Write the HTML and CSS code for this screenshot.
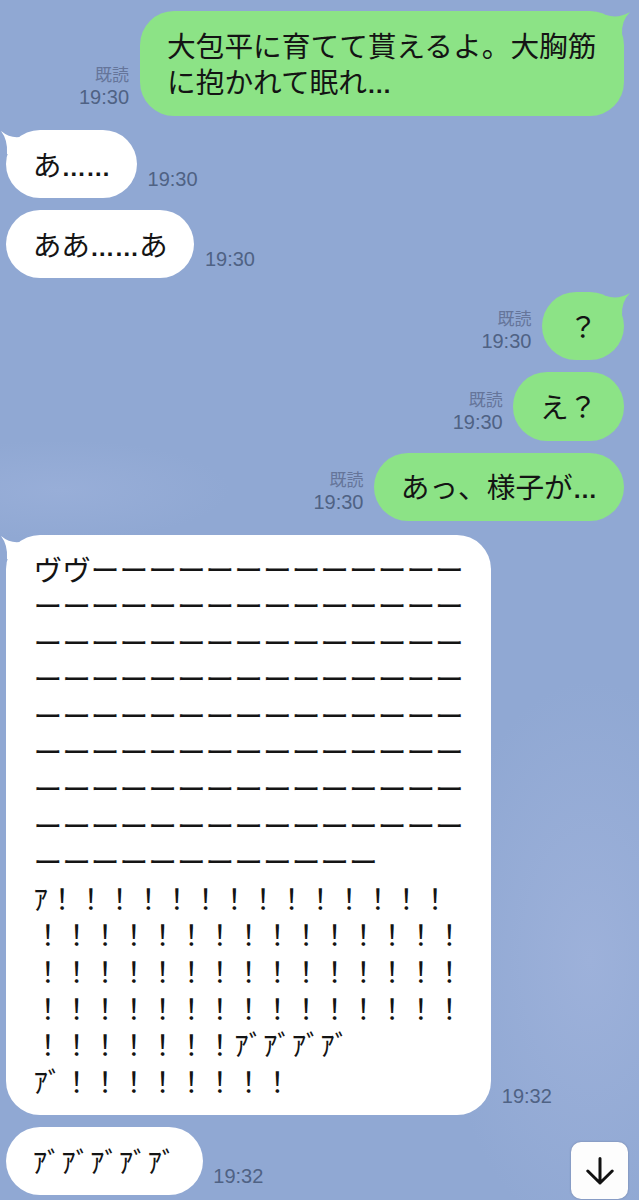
FILE: index.html
```html
<!DOCTYPE html>
<html lang="ja">
<head>
<meta charset="utf-8">
<title>トーク</title>
<link rel="stylesheet" href="styles.css">
</head>
<body>
<main class="chat">
  <div class="row sent first">
    <div class="meta"><span class="read">既読</span><span class="time">19:30</span></div>
    <div class="bubble long green">
      <svg class="tail tail-right" viewBox="0 0 24 24"><path d="M0 4 Q12 8 24 1 Q15 10 16 24 L0 24Z"/></svg>
      大包平に育てて貰えるよ。大胸筋<br>に抱かれて眠れ<span class="dots">…</span>
    </div>
  </div>
  <div class="row received first">
    <div class="bubble white">
      <svg class="tail tail-left" viewBox="0 0 24 24"><path d="M24 6 Q12 10 1 1 Q8 10 7 24 L24 24Z"/></svg>
      あ<span class="dots">……</span>
    </div>
    <div class="meta"><span class="time">19:30</span></div>
  </div>
  <div class="row received">
    <div class="bubble white">ああ<span class="dots">……</span>あ</div>
    <div class="meta"><span class="time">19:30</span></div>
  </div>
  <div class="row sent first">
    <div class="meta"><span class="read">既読</span><span class="time">19:30</span></div>
    <div class="bubble green">
      <svg class="tail tail-right" viewBox="0 0 24 24"><path d="M0 4 Q12 8 24 1 Q15 10 16 24 L0 24Z"/></svg>
      ？
    </div>
  </div>
  <div class="row sent">
    <div class="meta"><span class="read">既読</span><span class="time">19:30</span></div>
    <div class="bubble green">え？</div>
  </div>
  <div class="row sent">
    <div class="meta"><span class="read">既読</span><span class="time">19:30</span></div>
    <div class="bubble green">あっ、様子が<span class="dots">…</span></div>
  </div>
  <div class="row received first">
    <div class="bubble long white">
      <svg class="tail tail-left" viewBox="0 0 24 24"><path d="M24 6 Q12 10 1 1 Q8 10 7 24 L24 24Z"/></svg>
      ヴヴーーーーーーーーーーーーー<br>
      ーーーーーーーーーーーーーーー<br>
      ーーーーーーーーーーーーーーー<br>
      ーーーーーーーーーーーーーーー<br>
      ーーーーーーーーーーーーーーー<br>
      ーーーーーーーーーーーーーーー<br>
      ーーーーーーーーーーーーーーー<br>
      ーーーーーーーーーーーーーーー<br>
      ーーーーーーーーーーーー<br>
      ｱ！！！！！！！！！！！！！！<br>
      ！！！！！！！！！！！！！！！<br>
      ！！！！！！！！！！！！！！！<br>
      ！！！！！！！！！！！！！！！<br>
      ！！！！！！！ｱﾞｱﾞｱﾞｱﾞ<br>
      ｱﾞ！！！！！！！！
    </div>
    <div class="meta"><span class="time">19:32</span></div>
  </div>
  <div class="row received">
    <div class="bubble white">ｱﾞｱﾞｱﾞｱﾞｱﾞ</div>
    <div class="meta"><span class="time">19:32</span></div>
  </div>
</main>
<button class="scroll-down" type="button" aria-label="一番下へ">
  <svg viewBox="0 0 28 28"><path d="M14 1.5V26M1.8 14 14 26 26.2 14"/></svg>
</button>
</body>
</html>
```
FILE: styles.css
```css
html, body {
  margin: 0;
  padding: 0;
}
body {
  position: relative;
  width: 639px;
  height: 1200px;
  overflow: hidden;
  background-color: #90a8d3;
  background-image:
    radial-gradient(ellipse 150px 280px at 590px 960px, #9db1da 0%, rgba(157,177,218,0) 100%),
    radial-gradient(ellipse 170px 50px at 60px 490px, #98aed8 0%, rgba(152,174,216,0) 100%);
  font-family: "Noto Sans CJK JP", "Noto Sans", sans-serif;
  color: #141414;
}
.chat {
  display: flex;
  flex-direction: column;
  gap: 12px;
  padding: 11px 15px 0 6px;
}
.row {
  display: flex;
  align-items: flex-end;
}
.row + .row.first {
  margin-top: 2px;
}
.sent {
  justify-content: flex-end;
}
.bubble {
  position: relative;
  padding: 15.8px 26.7px;
  border-radius: 34px;
  font-size: 28.7px;
  line-height: 36.6px;
  white-space: nowrap;
}
.bubble.long {
  padding-left: 27.5px;
  padding-right: 27.5px;
}
.green {
  background: #8ce386;
  fill: #8ce386;
}
.white {
  background: #fff;
  fill: #fff;
}
.dots {
  font-family: "Liberation Sans", sans-serif;
  font-size: 24.5px;
  font-weight: 700;
  line-height: 0;
}
.tail {
  position: absolute;
  top: 0;
  width: 24px;
  height: 24px;
}
.tail-right {
  right: -6px;
}
.tail-left {
  left: -6px;
}
.meta {
  display: flex;
  flex-direction: column;
  align-items: flex-end;
  margin: 0 10.5px 7px;
  font-family: "Liberation Sans", sans-serif;
}
.received .meta {
  margin-right: 0;
}
.sent .meta {
  margin-left: 0;
}
.read {
  font-family: "Noto Sans CJK JP", sans-serif;
  font-size: 17px;
  line-height: 22px;
  color: #65759a;
}
.time {
  font-size: 20px;
  line-height: 24px;
  color: #4f6284;
}
.scroll-down {
  position: absolute;
  left: 571px;
  top: 1142px;
  width: 57px;
  height: 57px;
  padding: 0;
  border: 0;
  border-radius: 10px;
  background: #fdfdfd;
  box-shadow: 0 0 2px rgba(70, 80, 110, 0.5);
  display: flex;
  align-items: center;
  justify-content: center;
}
.scroll-down svg {
  width: 28px;
  height: 28px;
  fill: none;
  stroke: #111;
  stroke-width: 3;
  stroke-linecap: round;
  stroke-linejoin: round;
}
```
